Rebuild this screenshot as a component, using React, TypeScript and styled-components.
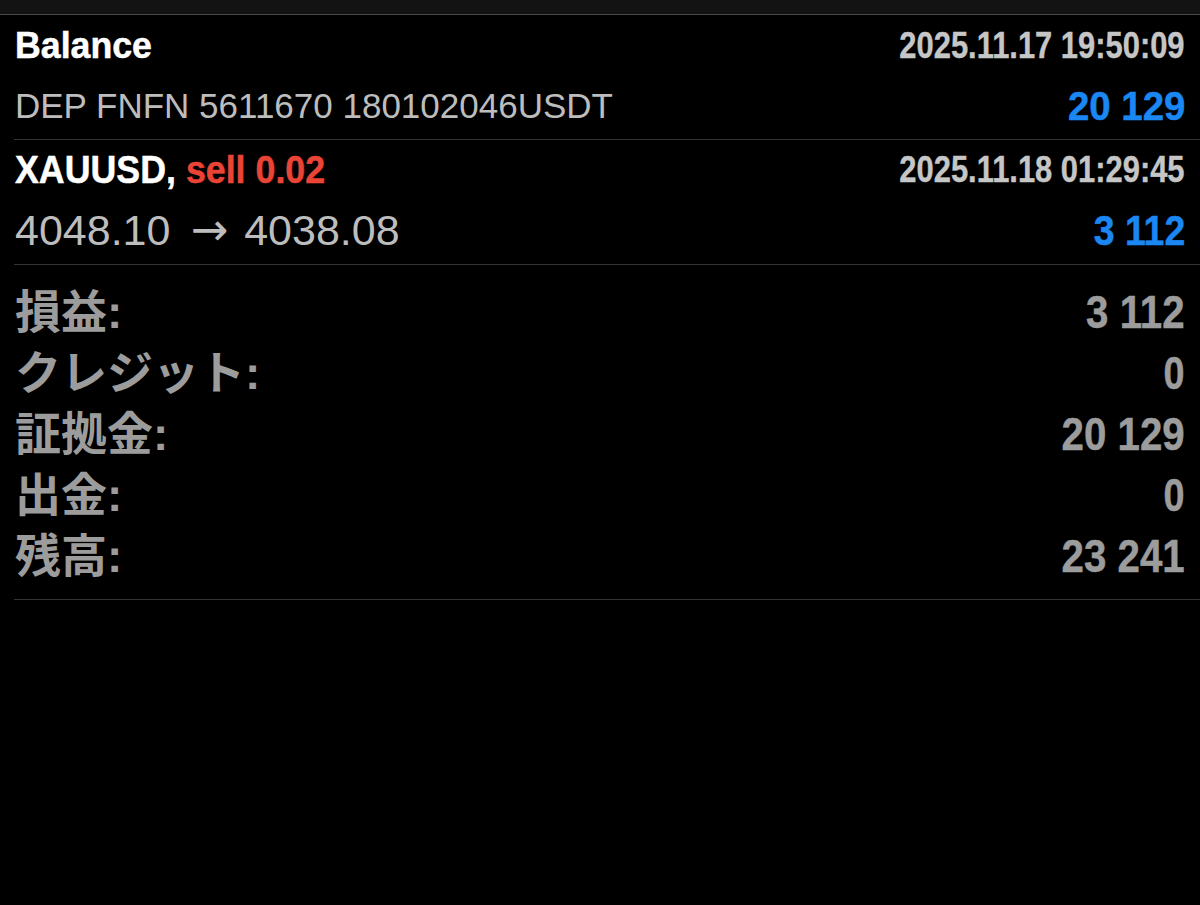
import React from "react";
import styled, { createGlobalStyle } from "styled-components";

const GlobalStyle = createGlobalStyle`
  html, body {
    margin: 0;
    padding: 0;
    background: #000;
  }
  body {
    font-family: "Liberation Sans", "Noto Sans CJK JP", sans-serif;
    -webkit-font-smoothing: antialiased;
  }
`;

const balance = {
  time: "2025.11.17 19:50:09",
  detail: "DEP FNFN 5611670 180102046USDT",
  amount: "20 129",
};

const trade = {
  symbol: "XAUUSD,",
  side: "sell 0.02",
  time: "2025.11.18 01:29:45",
  open: "4048.10",
  close: "4038.08",
  profit: "3 112",
};

const summary = [
  { label: "損益:", value: "3 112" },
  { label: "クレジット:", value: "0" },
  { label: "証拠金:", value: "20 129" },
  { label: "出金:", value: "0" },
  { label: "残高:", value: "23 241" },
];

const App = () => {
  return (
    <SPage>
      <GlobalStyle />
      <STopBar />

      <SDeal $padTop={1}>
        <SLine>
          <SSqueeze $scale={0.965}>
            <STitle $size={37}>Balance</STitle>
          </SSqueeze>
          <SSqueeze $scale={0.835} $right>
            <STime>{balance.time}</STime>
          </SSqueeze>
        </SLine>
        <SLine>
          <SDetail $size={35}>{balance.detail}</SDetail>
          <SSqueeze $scale={0.96} $right>
            <SAmount $size={40}>{balance.amount}</SAmount>
          </SSqueeze>
        </SLine>
      </SDeal>

      <SDeal $padTop={0}>
        <SLine>
          <SSqueeze $scale={0.917}>
            <STitle $size={39}>
              {trade.symbol} <SSide>{trade.side}</SSide>
            </STitle>
          </SSqueeze>
          <SSqueeze $scale={0.835} $right>
            <STime>{trade.time}</STime>
          </SSqueeze>
        </SLine>
        <SLine>
          <SDetail $size={43}>
            {trade.open}
            <SArrow>→</SArrow>
            {trade.close}
          </SDetail>
          <SSqueeze $scale={0.87} $right>
            <SAmount $size={43}>{trade.profit}</SAmount>
          </SSqueeze>
        </SLine>
      </SDeal>

      <SSummary>
        {summary.map((s) => (
          <SSumRow key={s.label}>
            <SSumLabel>{s.label}</SSumLabel>
            <SSqueeze $scale={s.value === "0" ? 0.82 : 0.875} $right>
              <SSumValue>{s.value}</SSumValue>
            </SSqueeze>
          </SSumRow>
        ))}
      </SSummary>
    </SPage>
  );
};

export default App;

const SPage = styled.div`
  width: 1200px;
  height: 905px;
  background: #000;
  overflow: hidden;
`;

const STopBar = styled.div`
  height: 14px;
  background: #131313;
  border-bottom: 1px solid #4a4a4a;
`;

const SDeal = styled.div<{ $padTop: number }>`
  margin-left: 14px;
  padding: ${(p) => p.$padTop}px 15px 0 1px;
  border-bottom: 1px solid #343434;
  height: 125px;
  box-sizing: border-box;
`;

const SLine = styled.div`
  display: flex;
  align-items: flex-start;
  justify-content: space-between;
  height: 60px;
  white-space: nowrap;
`;

const SSqueeze = styled.span<{ $scale: number; $right?: boolean }>`
  display: inline-block;
  transform: scaleX(${(p) => p.$scale});
  transform-origin: ${(p) => (p.$right ? "right" : "left")} center;
`;

const STitle = styled.span<{ $size: number }>`
  font-weight: 700;
  font-size: ${(p) => p.$size}px;
  line-height: 60px;
  color: #fff;
  -webkit-text-stroke: 0.5px #fff;
`;

const SSide = styled.span`
  color: #ea4436;
  -webkit-text-stroke: 0.5px #ea4436;
`;

const STime = styled.span`
  font-weight: 700;
  font-size: 37px;
  line-height: 60px;
  color: #c6c6c6;
  -webkit-text-stroke: 0.4px #c6c6c6;
`;

const SDetail = styled.span<{ $size: number }>`
  font-size: ${(p) => p.$size}px;
  line-height: 60px;
  color: #bdbdbd;
`;

const SArrow = styled.span`
  margin: 0 16px 0 20px;
  font-family: "DejaVu Sans", sans-serif;
  font-size: 45px;
`;

const SAmount = styled.span<{ $size: number }>`
  font-weight: 700;
  font-size: ${(p) => p.$size}px;
  line-height: 60px;
  color: #1a87f2;
  -webkit-text-stroke: 0.5px #1a87f2;
`;

const SSummary = styled.div`
  margin-left: 14px;
  padding: 17px 15px 12px 1px;
  border-bottom: 1px solid #343434;
`;

const SSumRow = styled.div`
  display: flex;
  align-items: baseline;
  justify-content: space-between;
  height: 61px;
  white-space: nowrap;
`;

const SSumLabel = styled.span`
  font-weight: 700;
  font-size: 46px;
  line-height: 61px;
  color: #9c9c9c;
`;

const SSumValue = styled.span`
  font-weight: 700;
  font-size: 46px;
  line-height: 61px;
  color: #9c9c9c;
  -webkit-text-stroke: 0.5px #9c9c9c;
`;
